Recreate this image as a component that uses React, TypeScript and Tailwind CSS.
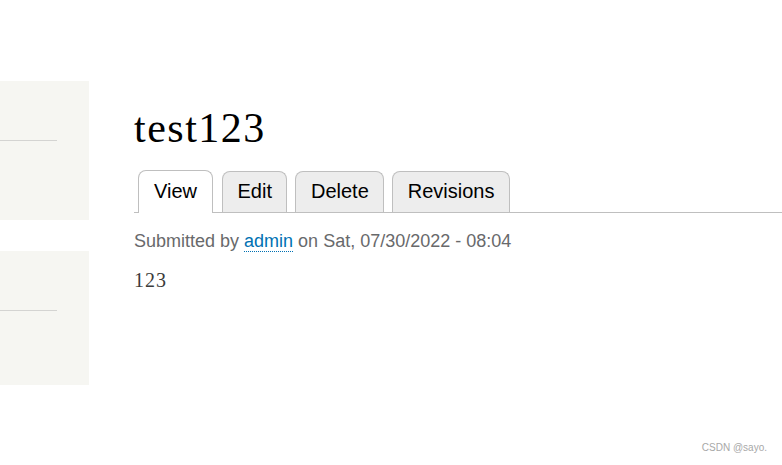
const TABS = [
  { label: "View", active: true },
  { label: "Edit", active: false },
  { label: "Delete", active: false },
  { label: "Revisions", active: false },
];

function SidebarBlock({ height }: { height: string }) {
  return (
    <div className={`${height} bg-[#f6f6f2] pt-[59px] pr-[32px]`}>
      <div className="h-px bg-[#d4d4d2]" />
    </div>
  );
}

export default function App() {
  return (
    <div className="relative h-[465px] w-full overflow-hidden bg-white">
      <div className="flex">
        {/* Sidebar */}
        <aside className="w-[89px] shrink-0 pt-[81px] flex flex-col gap-[31px]">
          <SidebarBlock height="h-[139px]" />
          <SidebarBlock height="h-[134px]" />
        </aside>

        {/* Main content */}
        <main className="flex-1 ml-[45px] pt-[104px]">
          <h1
            className="text-[42px] leading-[48px] tracking-[1.5px] text-black"
            style={{ fontFamily: '"Liberation Serif", Georgia, serif' }}
          >
            test123
          </h1>

          <ul
            className="mt-[18px] flex items-end gap-2 pl-[4px] border-b border-[#bfbfbf]"
            style={{ fontFamily: '"Liberation Sans", Arial, sans-serif' }}
          >
            {TABS.map((tab) =>
              tab.active ? (
                <li
                  key={tab.label}
                  className="-mb-px mr-px rounded-t-[8px] border border-b-0 border-[#bfbfbf] bg-white px-[15px] pt-[8px] pb-[10px] text-[20px] leading-[24px] text-black"
                >
                  {tab.label}
                </li>
              ) : (
                <li
                  key={tab.label}
                  className="rounded-t-[8px] border border-b-0 border-[#bfbfbf] bg-[#ededed] px-[14.5px] pt-[7px] pb-[9px] text-[20px] leading-[24px] text-black"
                >
                  {tab.label}
                </li>
              )
            )}
          </ul>

          <p
            className="mt-[15px] text-[18px] leading-[27px] text-[#68696b]"
            style={{ fontFamily: '"Liberation Sans", Arial, sans-serif' }}
          >
            Submitted by{" "}
            <span className="text-[#0071b3] border-b border-dotted border-[#0071b3]">admin</span> on Sat, 07/30/2022 - 08:04
          </p>

          <p
            className="mt-[10px] text-[20px] leading-[30px] tracking-[1px] text-[#3b3b3b]"
            style={{ fontFamily: '"Liberation Serif", Georgia, serif' }}
          >
            123
          </p>
        </main>
      </div>

      {/* Watermark */}
      <div
        className="absolute right-[15px] bottom-[10px] text-[10px] text-[#a8a8a8]"
        style={{ fontFamily: '"Liberation Sans", Arial, sans-serif' }}
      >
        CSDN @sayo.
      </div>
    </div>
  );
}
